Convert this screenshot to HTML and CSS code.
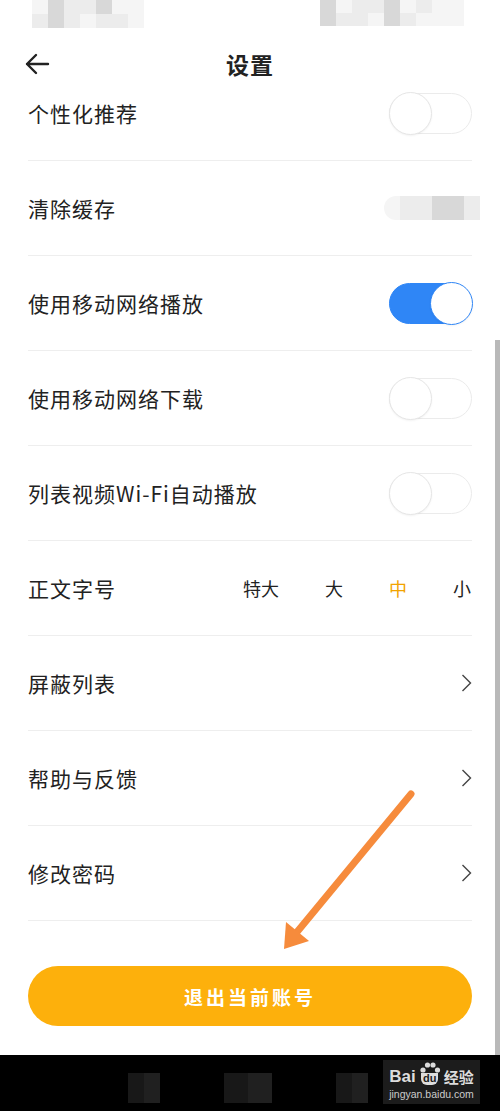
FILE: index.html
```html
<!DOCTYPE html>
<html lang="zh-CN">
<head>
  <meta charset="UTF-8" />
  <meta name="viewport" content="width=device-width, initial-scale=1.0" />
  <title>设置</title>
  <link rel="stylesheet" href="styles.css">
</head>
<body>
  <div class="screen">
    <div class="status-bar">
      <div class="mosaic mosaic-left">
        <span class="c3"></span><span class="c2"></span><span class="c1"></span><span class="c1"></span><span class="c2"></span><span class="c3"></span><span class="c3"></span>
        <span class="c1"></span><span class="c2"></span><span class="c1"></span><span class="c3"></span><span class="c1"></span><span class="c1"></span><span class="c3"></span>
      </div>
      <div class="mosaic mosaic-right">
        <span class="c2"></span><span class="c3"></span><span class="c1"></span><span class="c1"></span><span class="c2"></span><span class="c3"></span><span class="c1"></span><span class="c3"></span><span class="c3"></span>
        <span class="c2"></span><span class="c1"></span><span class="c1"></span><span class="c3"></span><span class="c2"></span><span class="c1"></span><span class="c3"></span><span class="c3"></span><span class="c3"></span>
      </div>
    </div>

    <header class="top-bar">
      <button class="back-button" aria-label="返回">
        <svg width="26" height="22" viewBox="0 0 26 22"><path d="M24 11H3M12 2L3 11l9 9" fill="none" stroke="#222" stroke-width="2.4" stroke-linecap="round" stroke-linejoin="round"/></svg>
      </button>
      <h1>设置</h1>
    </header>

    <ul class="settings">
      <li class="row">
        <span class="label">个性化推荐</span>
        <span class="switch"></span>
      </li>
      <li class="row">
        <span class="label">清除缓存</span>
        <span class="mosaic mosaic-value">
          <span class="c3"></span><span class="c1"></span><span class="c1"></span><span class="c2"></span><span class="c2"></span><span class="c1"></span>
        </span>
      </li>
      <li class="row">
        <span class="label">使用移动网络播放</span>
        <span class="switch on"></span>
      </li>
      <li class="row">
        <span class="label">使用移动网络下载</span>
        <span class="switch"></span>
      </li>
      <li class="row">
        <span class="label">列表视频Wi-Fi自动播放</span>
        <span class="switch"></span>
      </li>
      <li class="row">
        <span class="label">正文字号</span>
        <span class="sizes">
          <span>特大</span>
          <span>大</span>
          <span class="active">中</span>
          <span>小</span>
        </span>
      </li>
      <li class="row">
        <span class="label">屏蔽列表</span>
        <svg class="chevron" width="11" height="20" viewBox="0 0 11 20"><path d="M1.5 2l8 8-8 8" fill="none" stroke="#444" stroke-width="1.4"/></svg>
      </li>
      <li class="row">
        <span class="label">帮助与反馈</span>
        <svg class="chevron" width="11" height="20" viewBox="0 0 11 20"><path d="M1.5 2l8 8-8 8" fill="none" stroke="#444" stroke-width="1.4"/></svg>
      </li>
      <li class="row">
        <span class="label">修改密码</span>
        <svg class="chevron" width="11" height="20" viewBox="0 0 11 20"><path d="M1.5 2l8 8-8 8" fill="none" stroke="#444" stroke-width="1.4"/></svg>
      </li>
    </ul>

    <button class="logout-button">退出当前账号</button>

    <nav class="nav-bar">
      <span class="nav-block"></span>
      <span class="nav-block wide"></span>
      <span class="nav-block"></span>
      <div class="watermark">
        <div class="wm-logo">
          <span class="wm-bai">Bai</span>
          <span class="wm-paw">
            <svg width="24" height="14" viewBox="0 0 24 14"><circle cx="5" cy="9" r="2.6" fill="#ddd"/><circle cx="9.5" cy="4" r="2.6" fill="#ddd"/><circle cx="15" cy="4" r="2.6" fill="#ddd"/><circle cx="19.5" cy="9" r="2.6" fill="#ddd"/></svg>
            <span class="wm-du">du</span>
          </span>
          <span class="wm-jy">经验</span>
        </div>
        <div class="wm-url">jingyan.baidu.com</div>
      </div>
    </nav>

    <div class="scrollbar"></div>

    <svg class="pointer-arrow" width="500" height="1111" viewBox="0 0 500 1111">
      <line x1="411" y1="794" x2="297" y2="932" stroke="#f68b3c" stroke-width="7" stroke-linecap="round"/>
      <polygon points="284,949 286,922 309,941" fill="#f68b3c"/>
    </svg>
  </div>
</body>
</html>
```

FILE: styles.css
```css
* {
  box-sizing: border-box;
}

body {
  margin: 0;
  background-color: #fff;
  font-family: "Noto Sans CJK SC", "Noto Sans", sans-serif;
  color: #222;
}

.screen {
  position: relative;
  width: 500px;
  height: 1111px;
  overflow: hidden;
  display: flex;
  flex-direction: column;
}

/* status bar (blurred in the shot) */
.status-bar {
  height: 28px;
  display: flex;
  justify-content: space-between;
  padding: 0 36px 0 32px;
}

.mosaic {
  display: flex;
  flex-wrap: wrap;
}

.mosaic span {
  display: block;
  width: 16px;
  height: 14px;
}

.mosaic .c1 { background-color: #ececec; }
.mosaic .c2 { background-color: #d8d8d8; }
.mosaic .c3 { background-color: #f5f5f5; }

.mosaic-left {
  width: 112px;
  height: 28px;
}

.mosaic-right {
  width: 144px;
  height: 26px;
}

.mosaic-right span {
  height: 13px;
}

/* top bar */
.top-bar {
  position: relative;
  z-index: 1;
  height: 64px;
  padding-top: 8px;
  display: flex;
  align-items: center;
  justify-content: center;
  background-color: #fff;
}

.back-button {
  position: absolute;
  left: 24px;
  top: 25px;
  padding: 0;
  border: none;
  background: none;
  display: flex;
}

.top-bar h1 {
  margin: 0;
  font-size: 23px;
  font-weight: 700;
  letter-spacing: 1px;
}

/* settings list */
.settings {
  list-style: none;
  margin: -26px 28px 0;
  padding: 0;
}

.row {
  height: 95px;
  border-bottom: 1px solid #eeeeee;
  display: flex;
  align-items: center;
  justify-content: space-between;
}

.label {
  font-size: 21px;
  letter-spacing: 1px;
}

.switch {
  position: relative;
  width: 83px;
  height: 41px;
  border-radius: 21px;
  border: 1.5px solid #ebebeb;
  background-color: #fff;
}

.switch::after {
  content: "";
  position: absolute;
  top: -1.5px;
  left: -1.5px;
  width: 41px;
  height: 41px;
  border-radius: 50%;
  border: 1.5px solid #e6e6e6;
  background-color: #fff;
  box-shadow: 0 1px 2px rgba(0, 0, 0, 0.05);
}

.switch.on {
  background-color: #2f86f6;
  border-color: #2f86f6;
}

.switch.on::after {
  left: auto;
  right: -1.5px;
  border-color: #2f86f6;
}

.mosaic-value {
  width: 96px;
  height: 24px;
  margin-right: -8px;
  border-radius: 12px 0 0 12px;
  overflow: hidden;
}

.mosaic-value span {
  height: 24px;
}

.sizes {
  display: flex;
  gap: 46px;
  font-size: 18px;
  margin-right: 1px;
}

.sizes .active {
  color: #f2a300;
}

.chevron {
  display: block;
}

/* logout */
.logout-button {
  margin: 45px 28px 0;
  height: 60px;
  border: none;
  border-radius: 30px;
  background-color: #fdb00c;
  color: #fff;
  font-family: inherit;
  font-size: 19px;
  font-weight: 700;
  letter-spacing: 3px;
}

/* system nav bar */
.nav-bar {
  margin-top: auto;
  height: 56px;
  background-color: #000;
  display: flex;
  align-items: flex-start;
  padding: 18px 0 0 128px;
  gap: 64px;
}

.nav-block {
  width: 32px;
  height: 30px;
  background: linear-gradient(90deg, #181818 50%, #202020 50%);
}

.nav-block.wide {
  width: 48px;
}

.watermark {
  margin: -13px 0 0 -49px;
  width: 97px;
  height: 44px;
  background-color: #1c1c1c;
  padding: 1px 0 0 0;
  display: flex;
  flex-direction: column;
  align-items: center;
}

.wm-logo {
  display: flex;
  align-items: flex-end;
  font-family: "Liberation Sans", Arial, sans-serif;
  font-weight: 700;
  color: #ddd;
  font-size: 17px;
  line-height: 17px;
}

.wm-paw {
  display: flex;
  flex-direction: column;
  align-items: center;
  margin: 0 2px;
}

.wm-paw svg {
  display: block;
  margin-bottom: -2px;
}

.wm-du {
  background-color: #ddd;
  color: #1c1c1c;
  font-size: 11px;
  line-height: 11px;
  padding: 0 2px 1px;
  border-radius: 0 0 6px 6px;
}

.wm-jy {
  font-family: "Noto Sans CJK SC", sans-serif;
  font-size: 15px;
}

.wm-url {
  font-family: "Liberation Sans", Arial, sans-serif;
  font-size: 10.5px;
  color: #ccc;
  margin-top: 3px;
}

/* overlays */
.scrollbar {
  position: absolute;
  right: 0;
  top: 340px;
  width: 5px;
  height: 715px;
  background-color: #b9b9b9;
}

.pointer-arrow {
  position: absolute;
  left: 0;
  top: 0;
  pointer-events: none;
}
```
